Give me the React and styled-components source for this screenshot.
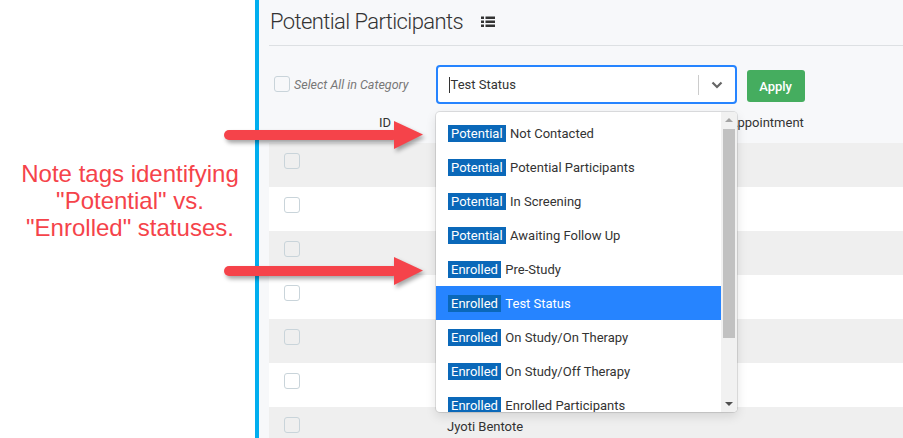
import React from "react";
import styled, { createGlobalStyle } from "styled-components";

const GlobalStyle = createGlobalStyle`
  body {
    margin: 0;
    background: #fff;
    font-family: Roboto, "Liberation Sans", sans-serif;
  }
`;

const Page = styled.div`
  position: relative;
  display: flex;
  width: 903px;
  height: 438px;
  overflow: hidden;
`;

const Aside = styled.div`
  width: 250px;
  padding: 160px 0 0 5px;
  text-align: center;
  color: #f5434a;
  font-family: "Liberation Sans", Arial, sans-serif;
  font-size: 24px;
  line-height: 27px;
`;

const Panel = styled.div`
  flex: 1;
  border-left: 4px solid #00aeef;
  background: #f7f8fa;
  padding-left: 10px;
`;

const TitleRow = styled.div`
  box-sizing: border-box;
  display: flex;
  align-items: center;
  height: 46px;
  border-bottom: 1px solid #dde0e3;
  padding: 0 0 3px 1px;
  gap: 18px;
`;

const Title = styled.h1`
  margin: 0;
  font-size: 22px;
  letter-spacing: -0.6px;
  font-weight: 300;
  color: #333;
`;

const Controls = styled.div`
  display: flex;
  align-items: flex-start;
  height: 62px;
  padding-left: 5px;
`;

const Check = styled.span`
  display: inline-block;
  box-sizing: border-box;
  width: 16px;
  height: 16px;
  border: 1px solid #c9d4da;
  border-radius: 3px;
`;

const SelectAll = styled.label`
  display: flex;
  align-items: center;
  gap: 4px;
  margin: 30px 27px 0 0;
  font-size: 12.5px;
  font-style: italic;
  color: #777;
`;

const SelectWrap = styled.div`
  position: relative;
  width: 301px;
  margin-top: 19px;
`;

const Control = styled.div`
  box-sizing: border-box;
  display: flex;
  align-items: center;
  height: 39px;
  border: 2px solid #2684ff;
  border-radius: 4px;
  background: #fff;
  padding-left: 11px;
  font-size: 13px;
  color: #333;
`;

const Caret = styled.span`
  width: 1px;
  height: 16px;
  background: #333;
  margin-right: 1px;
`;

const Value = styled.span`
  flex: 1;
`;

const Separator = styled.span`
  width: 1px;
  height: 20px;
  background: #ccc;
`;

const Indicator = styled.span`
  display: flex;
  align-items: center;
  justify-content: center;
  width: 36px;
`;

const ApplyButton = styled.button`
  margin: 24px 0 0 10px;
  width: 58px;
  height: 32px;
  border: none;
  border-radius: 3px;
  background: #45ad5f;
  color: #fff;
  font-family: Roboto, sans-serif;
  font-size: 13px;
  font-weight: 500;
`;

const Grid = styled.div`
  box-sizing: border-box;
  display: grid;
  grid-template-columns: 110px 68px 282px 1fr;
  align-items: start;
  height: ${(p) => (p.$header ? "35px" : "44px")};
  padding-top: ${(p) => (p.$header ? "7px" : "10px")};
  background: ${(p) => (p.$header ? "transparent" : p.$odd ? "#efefef" : "#fff")};
  font-size: 13px;
  color: #333;
`;

const Cell = styled.div`
  padding-left: ${(p) => p.$pad || 0}px;
  margin-top: ${(p) => p.$down || 0}px;
`;

const Menu = styled.div`
  position: absolute;
  top: 47px;
  left: 0;
  width: 301px;
  height: 300px;
  display: flex;
  background: #fff;
  border-radius: 4px;
  box-shadow: 0 0 0 1px rgba(0, 0, 0, 0.1), 0 4px 11px rgba(0, 0, 0, 0.12);
  overflow: hidden;
  z-index: 2;
`;

const Options = styled.div`
  flex: 1;
  padding-top: 4px;
`;

const Option = styled.div`
  display: flex;
  align-items: center;
  gap: 4px;
  height: 34px;
  padding-left: 12px;
  font-size: 13px;
  color: ${(p) => (p.$active ? "#fff" : "#333")};
  background: ${(p) => (p.$active ? "#2684ff" : "transparent")};
  white-space: nowrap;
`;

const Tag = styled.span`
  display: inline-block;
  height: 17px;
  line-height: 17px;
  padding: 0 3.5px;
  background: #0a68b9;
  color: #fff;
`;

const Scrollbar = styled.div`
  width: 16px;
  display: flex;
  flex-direction: column;
  align-items: center;
  background: #f1f1f1;
`;

const ScrollArrow = styled.div`
  width: 0;
  height: 0;
  border-left: 4px solid transparent;
  border-right: 4px solid transparent;
  ${(p) =>
    p.$down
      ? "border-top: 4px solid #505050; margin-top: auto; margin-bottom: 6px;"
      : "border-bottom: 4px solid #a3a3a3; margin-top: 6px;"}
`;

const Thumb = styled.div`
  width: 12px;
  height: 209px;
  margin-top: 7px;
  background: #c1c1c1;
`;

const ArrowSvg = styled.svg`
  position: absolute;
  left: 220px;
  top: ${(p) => p.$top}px;
  filter: drop-shadow(2px 3px 2px rgba(0, 0, 0, 0.35));
  z-index: 3;
`;

const Arrow = ({ top }) => (
  <ArrowSvg $top={top} width="212" height="36" viewBox="0 0 212 36">
    <rect x="4" y="11" width="174" height="10" rx="5" fill="#f5434a" />
    <polygon points="174,2 203,15.5 174,30" fill="#f5434a" />
  </ArrowSvg>
);

const ListIcon = () => (
  <svg width="14" height="11" viewBox="0 0 14 11">
    {[0.5, 4.5, 8.5].map((y) => (
      <g key={y} fill="#333">
        <rect x="0" y={y} width="3" height="2.5" />
        <rect x="4.5" y={y} width="9.5" height="2.5" />
      </g>
    ))}
  </svg>
);

const options = [
  ["Potential", "Not Contacted"],
  ["Potential", "Potential Participants"],
  ["Potential", "In Screening"],
  ["Potential", "Awaiting Follow Up"],
  ["Enrolled", "Pre-Study"],
  ["Enrolled", "Test Status"],
  ["Enrolled", "On Study/On Therapy"],
  ["Enrolled", "On Study/Off Therapy"],
  ["Enrolled", "Enrolled Participants"],
];

const rows = ["", "", "", "", "", "", "Jyoti Bentote"];

export default function App() {
  return (
    <Page>
      <GlobalStyle />
      <Aside>
        Note tags identifying
        <br />
        "Potential" vs.
        <br />
        "Enrolled" statuses.
      </Aside>
      <Panel>
        <TitleRow>
          <Title>Potential Participants</Title>
          <ListIcon />
        </TitleRow>
        <Controls>
          <SelectAll>
            <Check />
            Select All in Category
          </SelectAll>
          <SelectWrap>
            <Control>
              <Caret />
              <Value>Test Status</Value>
              <Separator />
              <Indicator>
                <svg width="12" height="8" viewBox="0 0 12 8">
                  <path d="M1.5 1.5 L6 6 L10.5 1.5" fill="none" stroke="#666" strokeWidth="2.2" />
                </svg>
              </Indicator>
            </Control>
            <Menu>
              <Options>
                {options.map(([tag, label], i) => (
                  <Option key={label} $active={i === 5}>
                    <Tag>{tag}</Tag>
                    {label}
                  </Option>
                ))}
              </Options>
              <Scrollbar>
                <ScrollArrow />
                <Thumb />
                <ScrollArrow $down />
              </Scrollbar>
            </Menu>
          </SelectWrap>
          <ApplyButton>Apply</ApplyButton>
        </Controls>
        <Grid $header>
          <div />
          <Cell>ID</Cell>
          <div />
          <Cell>Appointment</Cell>
        </Grid>
        {rows.map((name, i) => (
          <Grid key={i} $odd={i % 2 === 0}>
            <Cell $pad={15}>
              <Check />
            </Cell>
            <div />
            <Cell $down={2}>{name}</Cell>
            <div />
          </Grid>
        ))}
      </Panel>
      <Arrow top={119} />
      <Arrow top={255} />
    </Page>
  );
}
